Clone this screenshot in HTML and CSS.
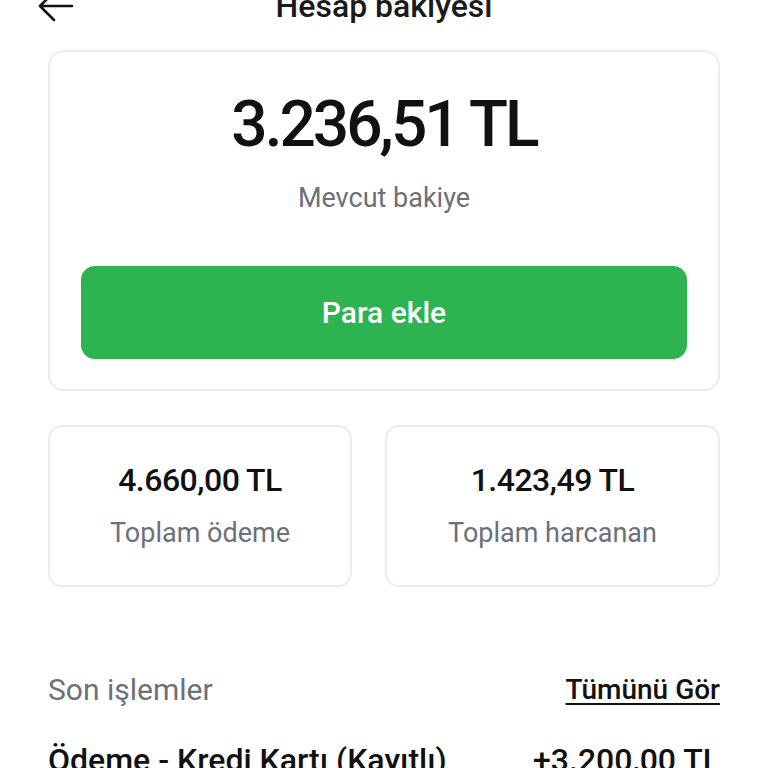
FILE: index.html
```html
<!DOCTYPE html>
<html lang="tr">
<head>
  <meta charset="UTF-8" />
  <meta name="viewport" content="width=device-width, initial-scale=1" />
  <title>Hesap bakiyesi</title>
  <link rel="stylesheet" href="styles.css">
</head>
<body>
  <div class="screen">
    <header class="topbar">
      <button class="back-btn" aria-label="Geri">
        <svg width="48" height="48" viewBox="0 0 24 24" fill="none" stroke="#111" stroke-width="1.3" stroke-linecap="round" stroke-linejoin="round">
          <path d="M20 12H4M11 5l-7 7 7 7"/>
        </svg>
      </button>
      <h1>Hesap bakiyesi</h1>
    </header>

    <section class="balance-card">
      <div class="balance-amount">3.236,51 TL</div>
      <div class="balance-label">Mevcut bakiye</div>
      <button class="add-btn">Para ekle</button>
    </section>

    <section class="stats">
      <div class="stat-card">
        <div class="stat-value">4.660,00 TL</div>
        <div class="stat-label">Toplam ödeme</div>
      </div>
      <div class="stat-card">
        <div class="stat-value">1.423,49 TL</div>
        <div class="stat-label">Toplam harcanan</div>
      </div>
    </section>

    <div class="section-head">
      <h2>Son işlemler</h2>
      <a href="#" class="see-all">Tümünü Gör</a>
    </div>

    <ul class="tx-list">
      <li class="tx-row">
        <span class="tx-title">Ödeme - Kredi Kartı (Kayıtlı)</span>
        <span class="tx-amount">+3.200,00 TL</span>
      </li>
    </ul>
  </div>
</body>
</html>
```

FILE: styles.css
```css
* {
  margin: 0;
  padding: 0;
  box-sizing: border-box;
}

body {
  background: #fff;
  font-family: Roboto, "Noto Sans", sans-serif;
  color: #111;
  overflow: hidden;
}

/* sayfa biraz kaydırılmış halde */
.screen {
  margin-top: -22px;
  padding: 0 48px;
}

.topbar {
  height: 56px;
  display: flex;
  align-items: center;
  justify-content: center;
  position: relative;
}

.back-btn {
  position: absolute;
  left: -16px;
  top: 4px;
  background: none;
  border: none;
  display: flex;
}

.topbar h1 {
  font-size: 32px;
  line-height: 56px;
  font-weight: 500;
  color: #1a1a1a;
}

/* Kart: mevcut bakiye */
.balance-card {
  margin-top: 16px;
  border: 2px solid #ececec;
  border-radius: 16px;
  padding: 35px 31px 30px;
  display: flex;
  flex-direction: column;
  align-items: center;
}

.balance-amount {
  font-size: 64px;
  font-weight: 500;
  letter-spacing: -3px;
  line-height: 76px;
}

.balance-label {
  margin-top: 18px;
  font-size: 27px;
  line-height: 34px;
  color: #6b7079;
}

.add-btn {
  margin-top: 51px;
  width: 100%;
  height: 93px;
  background: #2db34f;
  color: #fff;
  border: none;
  border-radius: 14px;
  font-family: inherit;
  font-size: 30px;
  font-weight: 500;
}

/* Toplamlar */
.stats {
  margin-top: 34px;
  display: grid;
  grid-template-columns: 304px 1fr;
  gap: 33px;
}

.stat-card {
  height: 162px;
  border: 2px solid #ececec;
  border-radius: 14px;
  display: flex;
  flex-direction: column;
  align-items: center;
  justify-content: center;
  gap: 18px;
}

.stat-value {
  font-size: 32px;
  line-height: 36px;
  font-weight: 500;
  letter-spacing: -0.5px;
}

.stat-label {
  font-size: 27px;
  line-height: 34px;
  color: #6b7079;
}

/* Son işlemler */
.section-head {
  margin-top: 83px;
  display: flex;
  justify-content: space-between;
  align-items: center;
  line-height: 40px;
}

.section-head h2 {
  font-size: 30px;
  font-weight: 400;
  color: #6b7079;
}

.see-all {
  font-size: 28px;
  font-weight: 500;
  color: #111;
  text-decoration: underline;
  text-underline-offset: 4px;
}

.tx-list {
  list-style: none;
  margin-top: 30px;
}

.tx-row {
  display: flex;
  justify-content: space-between;
  font-size: 32px;
  line-height: 40px;
  font-weight: 500;
}
```
